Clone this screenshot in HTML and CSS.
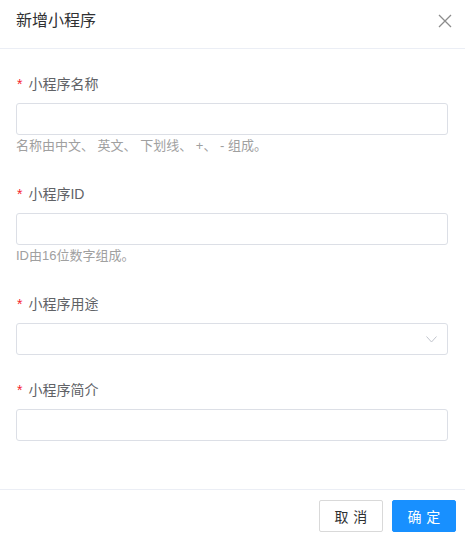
FILE: index.html
```html
<!DOCTYPE html>
<html lang="zh-CN">
<head>
<meta charset="utf-8">
<title>新增小程序</title>
<link rel="stylesheet" href="styles.css">
</head>
<body>
<div class="modal">
  <div class="modal-header">
    <span class="modal-title">新增小程序</span>
    <button class="close" aria-label="关闭">
      <svg width="14" height="14" viewBox="0 0 14 14"><path d="M1 1L13 13M13 1L1 13" stroke="#8c8c8c" stroke-width="1.3" fill="none"/></svg>
    </button>
  </div>
  <div class="modal-body">
    <div class="form-item">
      <label class="label"><span class="req">*</span>小程序名称</label>
      <div class="input"></div>
      <div class="help">名称由中文、 英文、 下划线、 +、 - 组成。</div>
    </div>
    <div class="form-item">
      <label class="label"><span class="req">*</span>小程序ID</label>
      <div class="input"></div>
      <div class="help">ID由16位数字组成。</div>
    </div>
    <div class="form-item">
      <label class="label"><span class="req">*</span>小程序用途</label>
      <div class="input select">
        <svg class="arrow" width="11" height="7" viewBox="0 0 11 7"><path d="M0.5 0.5L5.5 6L10.5 0.5" stroke="#c0c4cc" stroke-width="1" fill="none"/></svg>
      </div>
    </div>
    <div class="form-item last">
      <label class="label"><span class="req">*</span>小程序简介</label>
      <div class="input"></div>
    </div>
  </div>
  <div class="modal-footer">
    <button class="btn">取消</button>
    <button class="btn primary">确定</button>
  </div>
</div>
</body>
</html>
```

FILE: styles.css
```css
* { box-sizing: border-box; }
html, body {
  margin: 0;
  padding: 0;
  background: #fff;
}
body {
  font-family: "Liberation Sans", "Noto Sans CJK SC", sans-serif;
  font-size: 14px;
  color: #606266;
}
.modal {
  width: 465px;
}
.modal-header {
  display: flex;
  align-items: center;
  justify-content: space-between;
  padding: 10px 13px 16px 16px;
  border-bottom: 1px solid #ebeef5;
}
.modal-title {
  font-size: 16px;
  line-height: 22px;
  color: #303133;
}
.close {
  border: 0;
  background: none;
  padding: 0;
  width: 14px;
  height: 14px;
  display: flex;
  cursor: pointer;
}
.modal-body {
  padding: 24px 17px 24px 16px;
}
.form-item {
  margin-bottom: 24px;
}
.form-item.last {
  margin-bottom: 24px;
}
.label {
  display: block;
  line-height: 22px;
  margin-bottom: 8px;
  color: #606266;
}
.req {
  color: #f5222d;
  margin-left: 1px;
  margin-right: 6px;
}
.input {
  height: 32px;
  border: 1px solid #dcdfe6;
  border-radius: 3px;
  background: #fff;
}
.select {
  display: flex;
  align-items: center;
  justify-content: flex-end;
  padding-right: 10px;
}
.help {
  font-size: 13px;
  line-height: 22px;
  padding-bottom: 2px;
  color: #a0a0a0;
}
.modal-footer {
  display: flex;
  justify-content: flex-end;
  gap: 9px;
  padding: 10px 9px 5px 16px;
  border-top: 1px solid #ebeef5;
}
.btn {
  width: 64px;
  height: 32px;
  border: 1px solid #d9d9d9;
  border-radius: 2px;
  background: #fff;
  font-family: "Liberation Sans", "Noto Sans CJK SC", sans-serif;
  font-size: 14px;
  color: #303133;
  letter-spacing: 0.34em;
  padding: 0 0 0 0.34em;
}
.btn.primary {
  background: #1890ff;
  border-color: #1890ff;
  color: #fff;
}
```
